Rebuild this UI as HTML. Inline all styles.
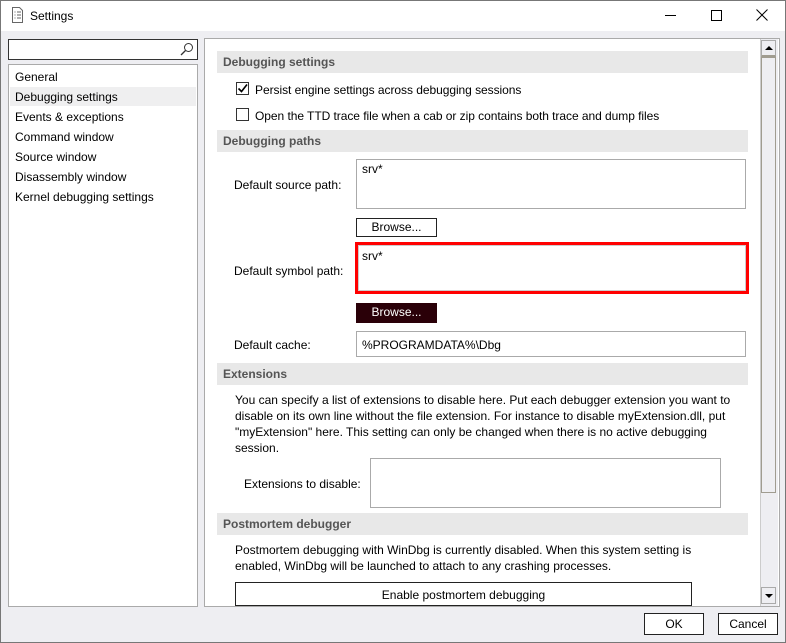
<!DOCTYPE html>
<html><head><meta charset="utf-8"><style>
*{margin:0;padding:0;box-sizing:border-box}
body{width:786px;height:643px;overflow:hidden;background:#eeeef2;font-family:"Liberation Sans",sans-serif;font-size:12px;color:#000;position:relative}
.a{position:absolute}
.t{position:absolute;white-space:nowrap;line-height:14px}
.hdr{position:absolute;left:217px;width:531px;height:22px;background:#e8e8e8;color:#555;font-weight:bold;font-size:12px;padding:4px 6px;line-height:14px}
.tb{position:absolute;background:#fff;border:1px solid #aaa}
.btn{position:absolute;background:#fff;border:1px solid #222;text-align:center;line-height:17px;font-size:12px}
.cb{position:absolute;width:13px;height:13px;border:1px solid #333;background:#fff}
</style></head><body>
<div class="a" style="left:0;top:0;width:786px;height:643px;border:1px solid #777;pointer-events:none;z-index:5"></div>
<div class="a" style="left:0;top:0;width:786px;height:31px;background:#fff"></div>
<svg class="a" style="left:11px;top:7px" width="13" height="16" viewBox="0 0 13 16"><path d="M1.5 .5h7l3 3v12h-10z M3.5 5h1 M6 5h4 M3.5 8h1 M6 8h4 M3.5 11h1 M6 11h4" fill="none" stroke="#666"/></svg>
<div class="t" style="left:30px;top:9px;font-size:12px">Settings</div>
<div class="a" style="left:665px;top:15px;width:11px;height:1px;background:#000"></div>
<div class="a" style="left:711px;top:10px;width:11px;height:11px;border:1px solid #000"></div>
<svg class="a" style="left:756px;top:9px" width="12" height="12"><path d="M.5 .5l11 11M11.5 .5l-11 11" stroke="#000"/></svg>

<div class="a" style="left:8px;top:39px;width:190px;height:21px;background:#fff;border:1px solid #333"></div>
<svg class="a" style="left:180px;top:42px" width="14" height="14"><circle cx="8.5" cy="5.5" r="4" fill="none" stroke="#333"/><path d="M5.5 8.5l-4.5 4.5" stroke="#333" stroke-width="1.3"/></svg>
<div class="a" style="left:8px;top:64px;width:190px;height:543px;background:#fff;border:1px solid #aaa"></div>
<div class="a" style="left:10px;top:87px;width:186px;height:19px;background:#efeff0"></div>
<div class="t" style="left:15px;top:70px">General</div>
<div class="t" style="left:15px;top:90px">Debugging settings</div>
<div class="t" style="left:15px;top:110px">Events &amp; exceptions</div>
<div class="t" style="left:15px;top:130px">Command window</div>
<div class="t" style="left:15px;top:150px">Source window</div>
<div class="t" style="left:15px;top:170px">Disassembly window</div>
<div class="t" style="left:15px;top:190px">Kernel debugging settings</div>

<div class="a" style="left:204px;top:38px;width:576px;height:569px;background:#fff;border:1px solid #aaa"></div>
<div class="a" style="left:760px;top:39px;width:18px;height:567px;background:#eeeef2;border-left:1px solid #ccc"></div>
<div class="a" style="left:761px;top:40px;width:15px;height:17px;border:1px solid #aaa;border-bottom:2px solid #a09c90;background:#eeeef2"></div>
<div class="a" style="left:765px;top:46px;width:0;height:0;border-left:4px solid transparent;border-right:4px solid transparent;border-bottom:4px solid #000"></div>
<div class="a" style="left:761px;top:57px;width:15px;height:436px;border:1px solid #a09c90;background:#eeeef2"></div>
<div class="a" style="left:761px;top:587px;width:15px;height:17px;border:1px solid #aaa;background:#eeeef2"></div>
<div class="a" style="left:765px;top:594px;width:0;height:0;border-left:4px solid transparent;border-right:4px solid transparent;border-top:4px solid #000"></div>

<div class="hdr" style="top:51px">Debugging settings</div>
<div class="cb" style="left:236px;top:82px"></div>
<svg class="a" style="left:237px;top:83px" width="11" height="11"><path d="M1.5 5.5l3 3 5.5-7" fill="none" stroke="#000" stroke-width="1.6"/></svg>
<div class="t" style="left:255px;top:83px;letter-spacing:-0.05px">Persist engine settings across debugging sessions</div>
<div class="cb" style="left:236px;top:108px"></div>
<div class="t" style="left:255px;top:109px;letter-spacing:-0.05px">Open the TTD trace file when a cab or zip contains both trace and dump files</div>

<div class="hdr" style="top:130px">Debugging paths</div>
<div class="t" style="left:234px;top:178px">Default source path:</div>
<div class="tb" style="left:356px;top:159px;width:390px;height:50px"><div class="t" style="left:5px;top:2px">srv*</div></div>
<div class="btn" style="left:356px;top:218px;width:81px;height:19px">Browse...</div>
<div class="t" style="left:234px;top:264px">Default symbol path:</div>
<div class="a" style="left:355px;top:242px;width:394px;height:52px;border:3px solid #f00;background:#fff"></div>
<div class="tb" style="left:358px;top:245px;width:388px;height:46px;border-color:#ccc"><div class="t" style="left:3px;top:3px">srv*</div></div>
<div class="btn" style="left:356px;top:303px;width:81px;height:20px;background:#2a0008;color:#fff;border-color:#2a0008">Browse...</div>
<div class="t" style="left:234px;top:338px">Default cache:</div>
<div class="tb" style="left:356px;top:331px;width:390px;height:26px"><div class="t" style="left:5px;top:6px">%PROGRAMDATA%\Dbg</div></div>

<div class="hdr" style="top:363px">Extensions</div>
<div class="a" style="left:235px;top:392px;width:500px;line-height:16px">You can specify a list of extensions to disable here. Put each debugger extension you want to disable on its own line without the file extension. For instance to disable myExtension.dll, put "myExtension" here. This setting can only be changed when there is no active debugging session.</div>
<div class="t" style="left:244px;top:477px">Extensions to disable:</div>
<div class="tb" style="left:370px;top:458px;width:351px;height:50px"></div>

<div class="hdr" style="top:513px">Postmortem debugger</div>
<div class="a" style="left:235px;top:542px;width:480px;line-height:16px">Postmortem debugging with WinDbg is currently disabled. When this system setting is enabled, WinDbg will be launched to attach to any crashing processes.</div>
<div class="btn" style="left:235px;top:582px;width:457px;height:24px;line-height:24px">Enable postmortem debugging</div>

<div class="btn" style="left:644px;top:613px;width:60px;height:22px;line-height:20px">OK</div>
<div class="btn" style="left:718px;top:613px;width:60px;height:22px;line-height:20px">Cancel</div>
</body></html>
